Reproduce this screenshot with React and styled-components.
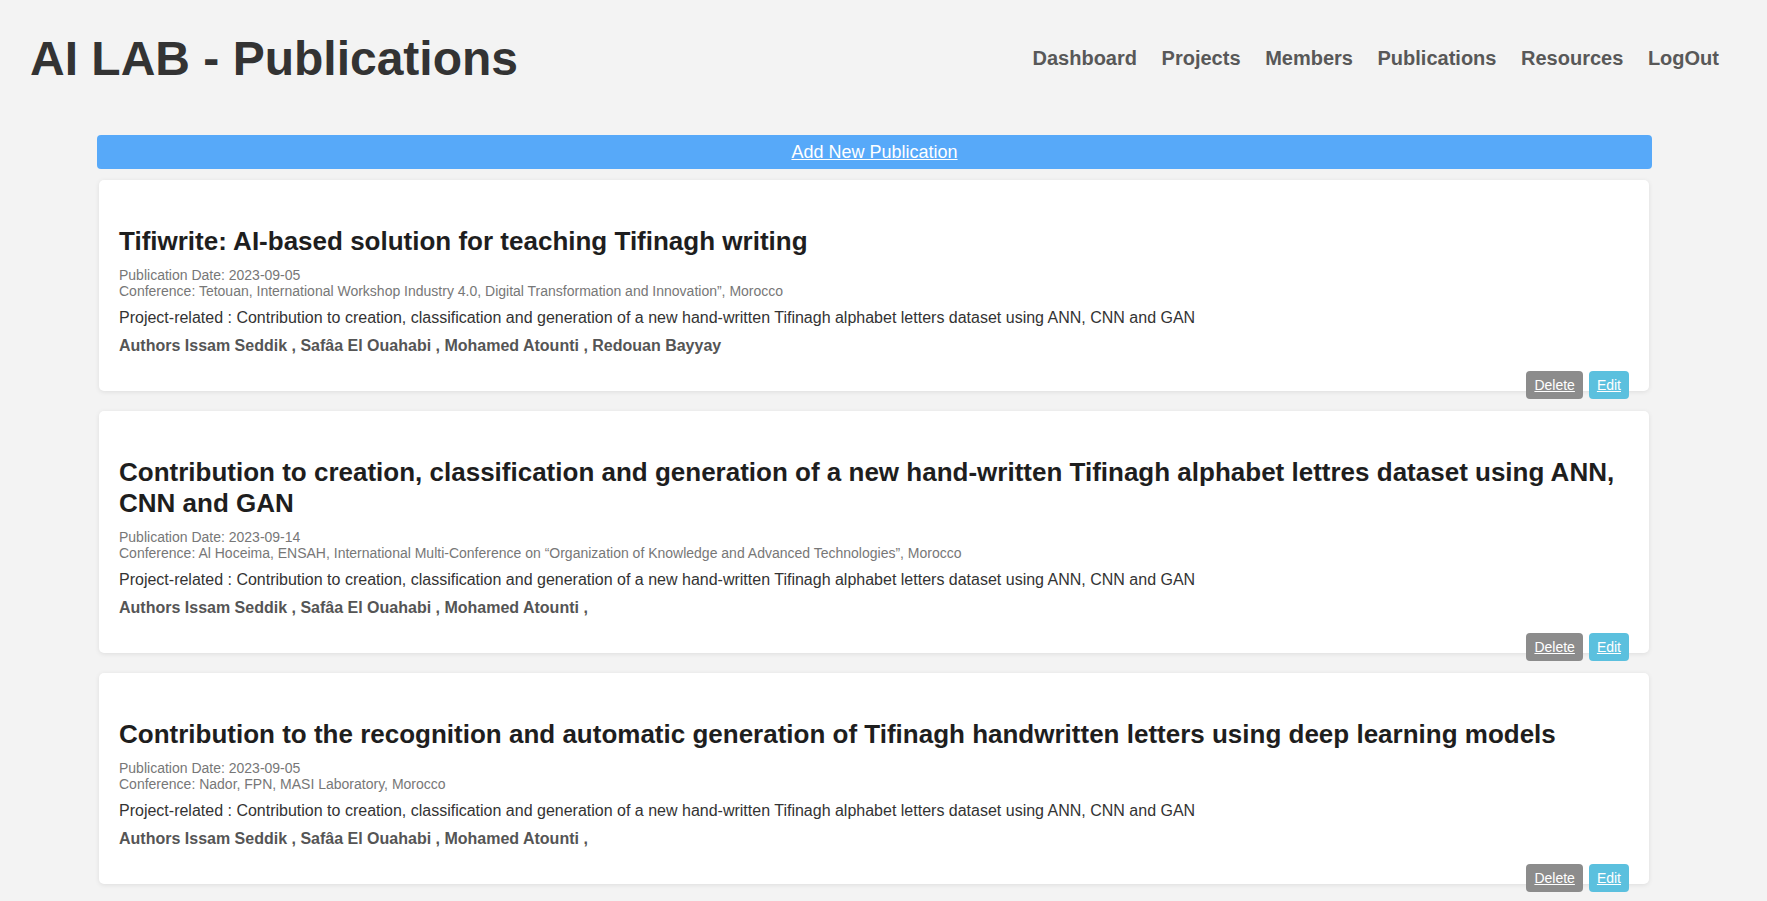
import styled, { createGlobalStyle } from "styled-components";

const publications = [
  {
    id: 1,
    title: "Tifiwrite: AI-based solution for teaching Tifinagh writing",
    date: "2023-09-05",
    conference:
      "Tetouan, International Workshop Industry 4.0, Digital Transformation and Innovation\u201d, Morocco",
    project:
      "Contribution to creation, classification and generation of a new hand-written Tifinagh alphabet letters dataset using ANN, CNN and GAN",
    authors: "Issam Seddik , Safâa El Ouahabi , Mohamed Atounti , Redouan Bayyay",
  },
  {
    id: 2,
    title:
      "Contribution to creation, classification and generation of a new hand-written Tifinagh alphabet lettres dataset using ANN, CNN and GAN",
    date: "2023-09-14",
    conference:
      "Al Hoceima, ENSAH, International Multi-Conference on \u201cOrganization of Knowledge and Advanced Technologies\u201d, Morocco",
    project:
      "Contribution to creation, classification and generation of a new hand-written Tifinagh alphabet letters dataset using ANN, CNN and GAN",
    authors: "Issam Seddik , Safâa El Ouahabi , Mohamed Atounti ,",
  },
  {
    id: 3,
    title:
      "Contribution to the recognition and automatic generation of Tifinagh handwritten letters using deep learning models",
    date: "2023-09-05",
    conference: "Nador, FPN, MASI Laboratory, Morocco",
    project:
      "Contribution to creation, classification and generation of a new hand-written Tifinagh alphabet letters dataset using ANN, CNN and GAN",
    authors: "Issam Seddik , Safâa El Ouahabi , Mohamed Atounti ,",
  },
];

const navLinks = ["Dashboard", "Projects", "Members", "Publications", "Resources", "LogOut"];

const App = () => {
  return (
    <>
      <GlobalStyle />
      <Header>
        <Title>AI LAB - Publications</Title>
        <Nav>
          {navLinks.map((link) => (
            <NavLink key={link} href="#!">
              {link}
            </NavLink>
          ))}
        </Nav>
      </Header>
      <Main>
        <AddButton href="#!">Add New Publication</AddButton>
        <List>
          {publications.map((pub) => (
            <Card key={pub.id}>
              <CardTitle>{pub.title}</CardTitle>
              <Meta>
                <div>Publication Date: {pub.date}</div>
                <div>Conference: {pub.conference}</div>
              </Meta>
              <Project>Project-related : {pub.project}</Project>
              <Authors>Authors {pub.authors}</Authors>
              <CardActions>
                <ActionButton href="#!" $variant="delete">
                  Delete
                </ActionButton>
                <ActionButton href="#!" $variant="edit">
                  Edit
                </ActionButton>
              </CardActions>
            </Card>
          ))}
        </List>
      </Main>
    </>
  );
};

export default App;

const GlobalStyle = createGlobalStyle`
  html, body {
    margin: 0;
    padding: 0;
    background: #f3f3f3;
  }

  body {
    font-family: "Liberation Sans", Arial, Helvetica, sans-serif;
    color: #333;
  }
`;

const Header = styled.header`
  display: flex;
  justify-content: space-between;
  align-items: center;
  padding: 31px 48px 0 30px;
`;

const Title = styled.h1`
  margin: 0;
  font-size: 48px;
  line-height: 55px;
  font-weight: 700;
  color: #333;
`;

const Nav = styled.nav`
  display: flex;
  gap: 24.6px;
`;

const NavLink = styled.a`
  font-size: 20px;
  line-height: 23px;
  font-weight: 700;
  color: #585858;
  text-decoration: none;
`;

const Main = styled.main`
  padding: 49px 115px 20px 97px;
`;

const AddButton = styled.a`
  display: flex;
  justify-content: center;
  align-items: center;
  height: 34px;
  background: #57a9f9;
  border-radius: 4px;
  color: #fff;
  font-size: 18px;
  text-decoration: underline;
`;

const List = styled.div`
  display: flex;
  flex-direction: column;
  gap: 20px;
  margin: 11px 3px 0 2px;
`;

const Card = styled.div`
  background: #fff;
  border-radius: 5px;
  box-shadow: 0 1px 5px rgba(0, 0, 0, 0.09);
  padding: 20px 20px 0;
`;

const CardTitle = styled.h2`
  margin: 26px 0 10px;
  font-size: 26px;
  line-height: 31px;
  font-weight: 700;
  color: #1e1e1e;
`;

const Meta = styled.div`
  font-size: 14px;
  line-height: 16px;
  color: #777;
  margin-bottom: 10px;
`;

const Project = styled.p`
  margin: 0 0 10px;
  font-size: 16px;
  line-height: 18px;
  color: #333;
`;

const Authors = styled.p`
  margin: 0;
  font-size: 16px;
  line-height: 18px;
  font-weight: 700;
  color: #555;
`;

const CardActions = styled.div`
  display: flex;
  justify-content: flex-end;
  gap: 6px;
  margin: 16px 0 -8px;
`;

const ActionButton = styled.a`
  display: inline-flex;
  align-items: center;
  height: 28px;
  padding: 0 8px;
  border-radius: 4px;
  font-size: 14px;
  color: #fff;
  text-decoration: underline;
  background: ${(p) => (p.$variant === "delete" ? "#8c8c8c" : "#5bc0de")};
`;
